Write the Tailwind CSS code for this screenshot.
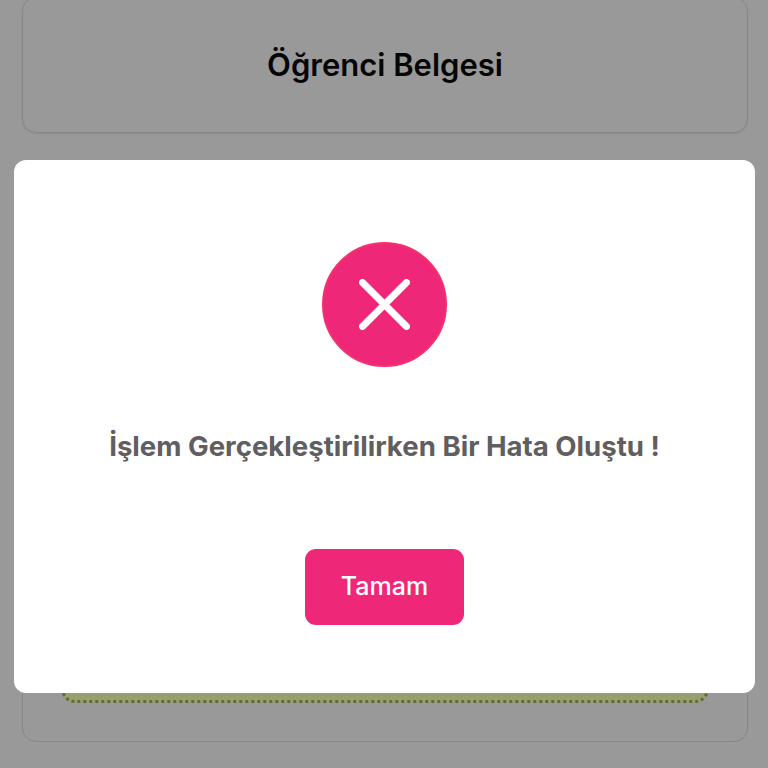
<!DOCTYPE html>
<html lang="tr">
<head>
<meta charset="utf-8">
<script src="https://cdn.jsdelivr.net/npm/@tailwindcss/browser@4"></script>
</head>
<body class="m-0 bg-[#999999]">
<div class="relative h-[768px] w-[768px] overflow-hidden bg-[#999999] font-['Inter',sans-serif]">
  <main class="-mt-[3px] flex flex-col gap-[32px] pr-[20px] pl-[22px]">
    <section class="flex h-[136px] items-center justify-center rounded-[14px] border border-[#868686] shadow-[0_1px_1px_rgba(0,0,0,0.08)]">
      <h1 class="text-[31px] font-semibold text-[#050505]">Öğrenci Belgesi</h1>
    </section>
    <section class="flex h-[577px] flex-col justify-end rounded-[14px] border border-[#868686] px-[38px] pb-[38px]">
      <div class="h-[60px] rounded-b-[14px] border-[3px] border-dotted border-[#5f6b3c] bg-[#98a070]"></div>
    </section>
  </main>
  <div class="absolute left-[14px] top-[160px] flex h-[533px] w-[741px] flex-col items-center rounded-[12px] bg-white">
    <div class="mt-[82px] flex h-[125px] w-[125px] items-center justify-center rounded-full border-2 border-[#f5306a] bg-[#ef2779]">
      <svg width="51" height="51" viewBox="0 0 51 51" fill="none" stroke="white" stroke-width="7" stroke-linecap="round"><path d="M3.5 3.5 L47.5 47.5 M47.5 3.5 L3.5 47.5"/></svg>
    </div>
    <p class="mt-[62px] text-[27.6px] leading-[34px] font-bold text-[#605e5e]">İşlem Gerçekleştirilirken Bir Hata Oluştu !</p>
    <button class="mt-[86px] h-[76px] w-[159px] rounded-[11px] bg-[#ef2779] text-[25px] font-medium text-white">Tamam</button>
  </div>
</div>
</body>
</html>
